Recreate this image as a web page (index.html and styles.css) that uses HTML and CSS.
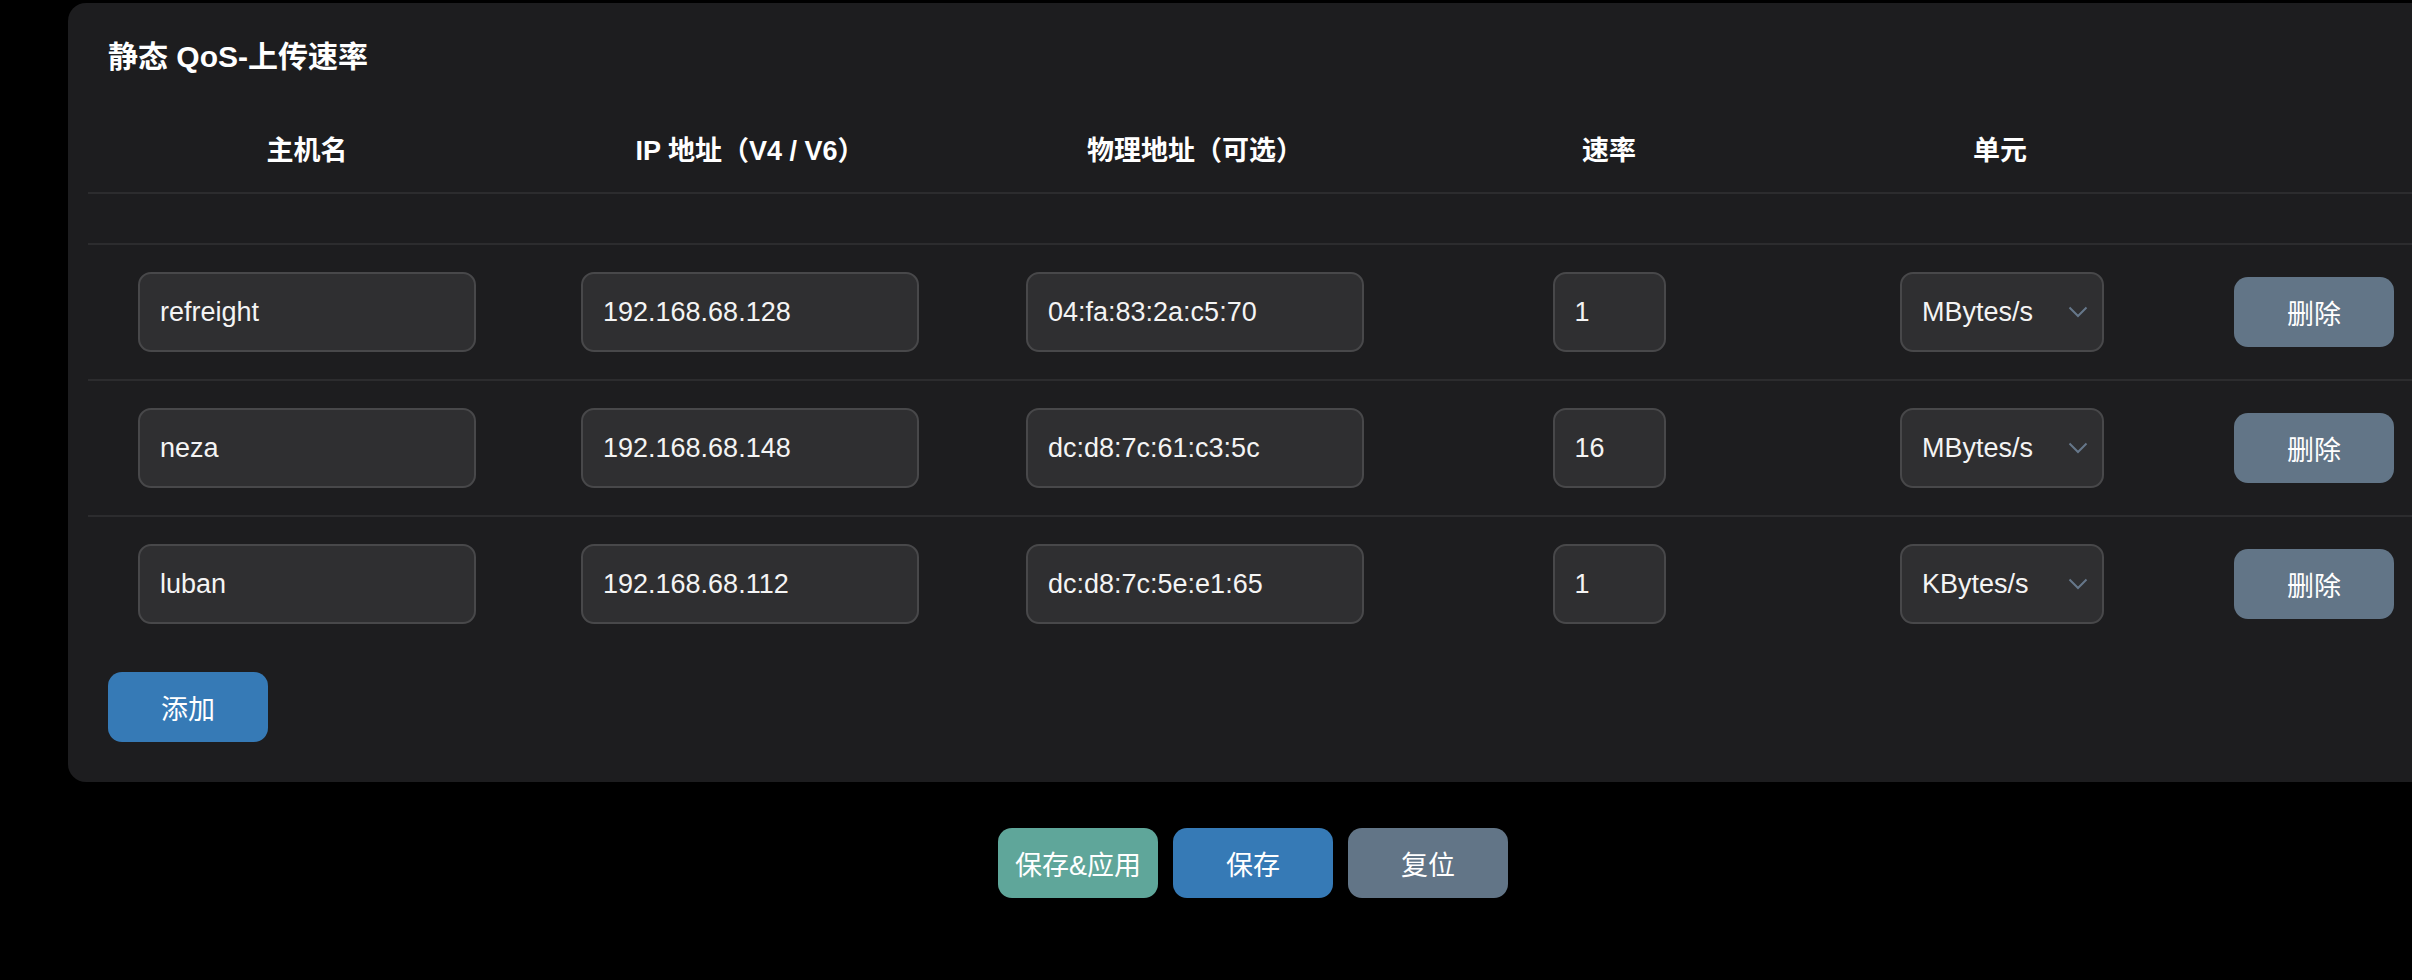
FILE: index.html
```html
<!DOCTYPE html>
<html lang="zh-CN">
<head>
    <meta charset="UTF-8">
    <meta name="viewport" content="width=device-width, initial-scale=1.0">
    <title>静态 QoS</title>
    <link rel="stylesheet" href="styles.css">
</head>
<body>

    <div class="page">
        <div class="card">
            <h3 class="card-title">静态 QoS-上传速率</h3>

            <div class="qos-table">
                <div class="tr head">
                    <div class="th">主机名</div>
                    <div class="th">IP 地址（V4 / V6）</div>
                    <div class="th">物理地址（可选）</div>
                    <div class="th">速率</div>
                    <div class="th">单元</div>
                    <div class="th"></div>
                </div>
                <div class="tr spacer"></div>

                <div class="tr">
                    <div class="td"><input class="field wide" type="text" value="refreight"></div>
                    <div class="td"><input class="field wide" type="text" value="192.168.68.128"></div>
                    <div class="td"><input class="field wide" type="text" value="04:fa:83:2a:c5:70"></div>
                    <div class="td"><input class="field rate" type="text" value="1"></div>
                    <div class="td">
                        <div class="select-wrap">
                            <select class="field unit">
                                <option>KBytes/s</option>
                                <option selected>MBytes/s</option>
                            </select>
                            <svg class="chevron" width="20" height="12" viewBox="0 0 20 12"><polyline points="1.5,1.5 10,10 18.5,1.5" fill="none" stroke="#66778a" stroke-width="2"/></svg>
                        </div>
                    </div>
                    <div class="td action"><button class="btn btn-slate">删除</button></div>
                </div>

                <div class="tr">
                    <div class="td"><input class="field wide" type="text" value="neza"></div>
                    <div class="td"><input class="field wide" type="text" value="192.168.68.148"></div>
                    <div class="td"><input class="field wide" type="text" value="dc:d8:7c:61:c3:5c"></div>
                    <div class="td"><input class="field rate" type="text" value="16"></div>
                    <div class="td">
                        <div class="select-wrap">
                            <select class="field unit">
                                <option>KBytes/s</option>
                                <option selected>MBytes/s</option>
                            </select>
                            <svg class="chevron" width="20" height="12" viewBox="0 0 20 12"><polyline points="1.5,1.5 10,10 18.5,1.5" fill="none" stroke="#66778a" stroke-width="2"/></svg>
                        </div>
                    </div>
                    <div class="td action"><button class="btn btn-slate">删除</button></div>
                </div>

                <div class="tr last">
                    <div class="td"><input class="field wide" type="text" value="luban"></div>
                    <div class="td"><input class="field wide" type="text" value="192.168.68.112"></div>
                    <div class="td"><input class="field wide" type="text" value="dc:d8:7c:5e:e1:65"></div>
                    <div class="td"><input class="field rate" type="text" value="1"></div>
                    <div class="td">
                        <div class="select-wrap">
                            <select class="field unit">
                                <option selected>KBytes/s</option>
                                <option>MBytes/s</option>
                            </select>
                            <svg class="chevron" width="20" height="12" viewBox="0 0 20 12"><polyline points="1.5,1.5 10,10 18.5,1.5" fill="none" stroke="#66778a" stroke-width="2"/></svg>
                        </div>
                    </div>
                    <div class="td action"><button class="btn btn-slate">删除</button></div>
                </div>
            </div>

            <button class="btn btn-blue add">添加</button>
        </div>

        <div class="actions">
            <button class="btn btn-teal">保存&amp;应用</button>
            <button class="btn btn-blue">保存</button>
            <button class="btn btn-slate">复位</button>
        </div>
    </div>

</body>
</html>
```

FILE: styles.css
```css
html, body {
    overflow: hidden;
}

body {
    margin: 0;
    background-color: #000;
    color: #fff;
    font-family: "Liberation Sans", "Noto Sans CJK SC", sans-serif;
}

.page {
    margin: 3px 0 0 68px;
    width: 2370px;
}

.card {
    background-color: #1d1d1f;
    border-radius: 18px;
    padding: 34px 20px 40px 20px;
}

.card-title {
    margin: 0 0 27px 20px;
    font-size: 30px;
    line-height: 40px;
    font-weight: bold;
}

.qos-table {
    display: flex;
    flex-direction: column;
}

.tr {
    display: grid;
    grid-template-columns: 438px 448px 442px 386px 396px 1fr;
    height: 134px;
    border-bottom: 2px solid #2c2c2e;
}

.tr.head {
    height: 88px;
}

.tr.spacer {
    height: 49px;
}

.tr.last {
    border-bottom: none;
}

.th, .td {
    display: flex;
    align-items: center;
    justify-content: center;
}

.th {
    font-size: 27px;
    font-weight: bold;
}

.td.action {
    justify-content: flex-start;
    padding-left: 36px;
}

.field {
    box-sizing: border-box;
    height: 80px;
    padding: 0 20px;
    background-color: #2f2f31;
    border: 2px solid #48484a;
    border-radius: 13px;
    color: #f4f4f4;
    font-family: "Liberation Sans", "Noto Sans CJK SC", sans-serif;
    font-size: 27px;
    outline: none;
}

.field.wide {
    width: 338px;
}

.field.rate {
    width: 113px;
}

.select-wrap {
    position: relative;
    margin-left: 4px;
}

.field.unit {
    width: 204px;
    -webkit-appearance: none;
    appearance: none;
}

.chevron {
    position: absolute;
    right: 16px;
    top: 34px;
    pointer-events: none;
}

.btn {
    width: 160px;
    height: 70px;
    border: none;
    border-radius: 14px;
    color: #fff;
    font-family: "Liberation Sans", "Noto Sans CJK SC", sans-serif;
    font-size: 27px;
    cursor: pointer;
}

.btn-blue {
    background-color: #367ab6;
}

.btn-teal {
    background-color: #5fa69a;
}

.btn-slate {
    background-color: #627587;
}

.add {
    margin: 21px 0 0 20px;
}

.actions {
    display: flex;
    justify-content: center;
    gap: 15px;
    margin-top: 46px;
}
```
